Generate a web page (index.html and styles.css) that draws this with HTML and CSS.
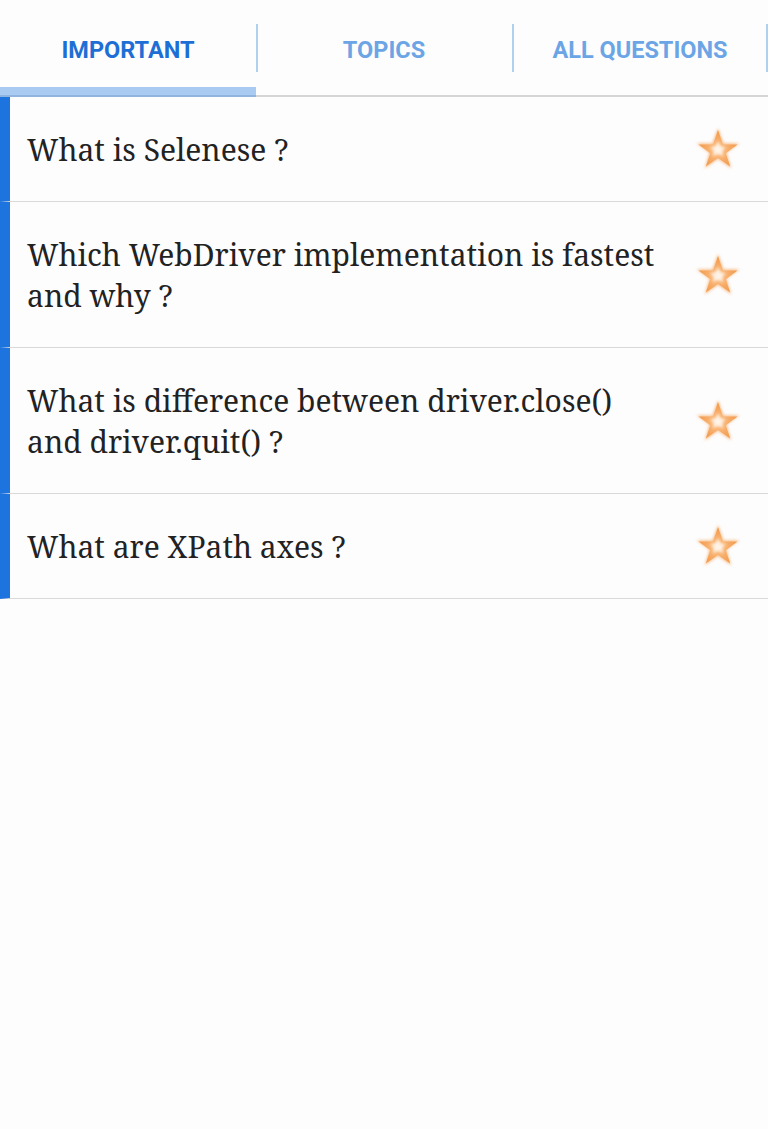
FILE: index.html
```html
<!DOCTYPE html>
<html>
<head>
<meta charset="utf-8">
<link rel="stylesheet" href="styles.css">
</head>
<body>
<div class="tabs">
  <div class="tab active"><span>IMPORTANT</span></div>
  <div class="tab"><span>TOPICS</span></div>
  <div class="tab"><span>ALL QUESTIONS</span></div>
</div>
<div class="list">
  <div class="row">
    <div class="q">What is Selenese ?</div>
    <div class="star"><svg viewBox="0 0 48 48" width="48" height="48"><use href="#star"/></svg></div>
  </div>
  <div class="row">
    <div class="q">Which WebDriver implementation is fastest and why ?</div>
    <div class="star"><svg viewBox="0 0 48 48" width="48" height="48"><use href="#star"/></svg></div>
  </div>
  <div class="row">
    <div class="q">What is difference between driver.close() and driver.quit() ?</div>
    <div class="star"><svg viewBox="0 0 48 48" width="48" height="48"><use href="#star"/></svg></div>
  </div>
  <div class="row">
    <div class="q">What are XPath axes ?</div>
    <div class="star"><svg viewBox="0 0 48 48" width="48" height="48"><use href="#star"/></svg></div>
  </div>
</div>
<svg width="0" height="0" class="defs">
  <defs>
    <filter id="glow" x="-30%" y="-30%" width="160%" height="160%">
      <feGaussianBlur stdDeviation="1.6"/>
    </filter>
    <radialGradient id="sg" cx="50%" cy="55%" r="50%">
      <stop offset="0" stop-color="#ffe9d2"/>
      <stop offset="0.35" stop-color="#f9b677"/>
      <stop offset="1" stop-color="#f39a4c"/>
    </radialGradient>
    <g id="star">
      <polygon filter="url(#glow)" fill="#f8c08c" points="24,3 29.6,18.3 45.5,18.3 32.6,27.8 37.3,43.5 24,34 10.7,43.5 15.4,27.8 2.5,18.3 18.4,18.3"/>
      <polygon fill="url(#sg)" points="24,5 29,19.5 43.5,19.5 31.8,28.2 36.2,41.5 24,33 11.8,41.5 16.2,28.2 4.5,19.5 19,19.5"/>
      <polygon filter="url(#glow)" fill="#fff3e8" points="24,16 26.5,22 32,22 27.6,25.8 29.3,31.5 24,28 18.7,31.5 20.4,25.8 16,22 21.5,22"/>
    </g>
  </defs>
</svg>
</body>
</html>
```
FILE: styles.css
```css
html, body {
  margin: 0;
  padding: 0;
  background: #fdfdfe;
}
body {
  width: 768px;
  height: 1129px;
  overflow: hidden;
}
.tabs {
  display: flex;
  border-bottom: 2px solid #d6d6d6;
  box-sizing: border-box;
  height: 97px;
}
.tab {
  flex: 1;
  position: relative;
  display: flex;
  align-items: center;
  justify-content: center;
  padding-top: 4px;
  font-family: Roboto, "Liberation Sans", sans-serif;
  font-weight: 700;
  font-size: 23.5px;
  color: #6ca5e6;
}
.tab + .tab::before {
  content: "";
  position: absolute;
  left: 0;
  top: 24px;
  height: 48px;
  width: 2px;
  background: #b3cfee;
}
.tab:last-child::after {
  content: "";
  position: absolute;
  right: 0;
  top: 24px;
  height: 48px;
  width: 2px;
  background: #b3cfee;
}
.tab.active {
  color: #1e6fd5;
}
.tab.active span::after {
  content: "";
  position: absolute;
  left: 0;
  right: 0;
  bottom: -2px;
  height: 10px;
  background: #a9cbf2;
  border-bottom: 2px solid #8fb4e0;
  box-sizing: border-box;
}
.list {
  display: flex;
  flex-direction: column;
}
.row {
  display: flex;
  align-items: center;
  border-left: 10px solid #1e74de;
  border-bottom: 1px solid #d9d9d9;
  padding: 0 0 0 17px;
  box-sizing: border-box;
}
.q {
  flex: 1;
  font-family: "Noto Serif", "DejaVu Serif", "Liberation Serif", serif;
  font-size: 30px;
  line-height: 41px;
  color: #222;
  padding: 32px 30px 31px 0;
}
.star {
  width: 48px;
  height: 48px;
  margin-right: 26px;
  flex: none;
}
.star svg {
  display: block;
}
.defs {
  position: absolute;
}
```
